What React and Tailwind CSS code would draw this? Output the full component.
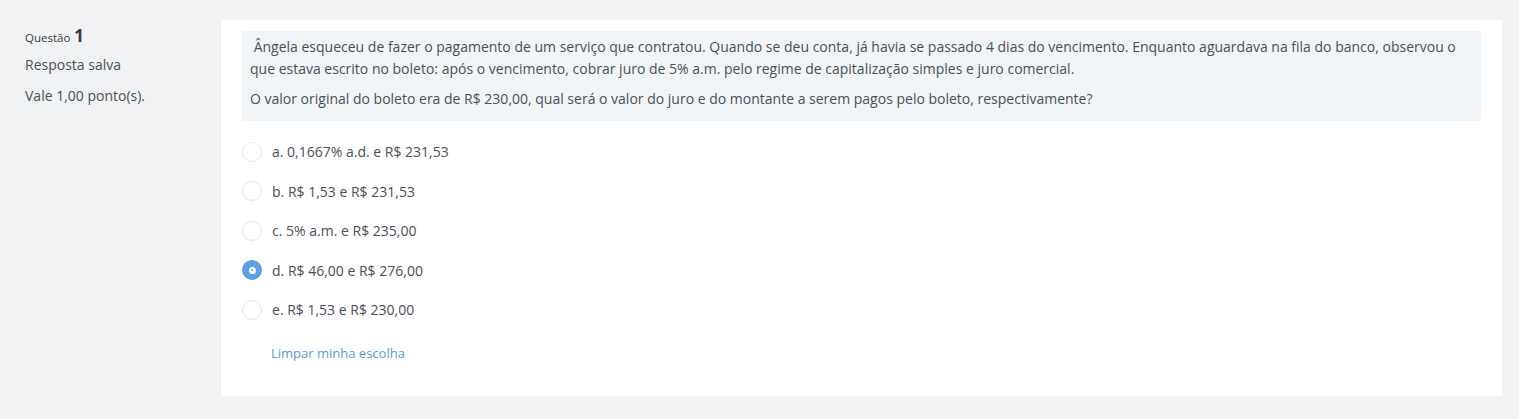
import React, { useState } from 'react';

const options = [
  { key: 'a', text: '0,1667% a.d. e R$ 231,53' },
  { key: 'b', text: 'R$ 1,53 e R$ 231,53' },
  { key: 'c', text: '5% a.m. e R$ 235,00' },
  { key: 'd', text: 'R$ 46,00 e R$ 276,00' },
  { key: 'e', text: 'R$ 1,53 e R$ 230,00' },
];

const Radio = ({ checked }) =>
  checked ? (
    <span className="flex h-[20px] w-[20px] items-center justify-center rounded-full bg-[#5b9fe0]">
      <span className="flex h-[7px] w-[7px] items-center justify-center rounded-full bg-white">
        <span className="h-[2px] w-[2px] rounded-full bg-[#5b9fe0]" />
      </span>
    </span>
  ) : (
    <span className="h-[20px] w-[20px] rounded-full border border-[#e3e6e8] bg-white" />
  );

const App = () => {
  const [answer, setAnswer] = useState('d');

  return (
    <div
      className="flex min-h-[419px] bg-[#f0f2f3] pt-[20px] text-[#495057]"
      style={{ fontFamily: '"Open Sans", "Noto Sans", sans-serif' }}
    >
      {/* Info da questão */}
      <div className="w-[221px] shrink-0 pl-[25px] pt-[5px]">
        <h3 className="flex items-baseline gap-[4px] leading-[22px] text-[#373a3c]">
          <span className="text-[11.5px]">Questão</span>
          <span className="text-[17px] font-bold">1</span>
        </h3>
        <div className="mt-[6px] text-[14px] leading-[20px]">Resposta salva</div>
        <div className="mt-[11px] text-[14px] leading-[20px]">Vale 1,00 ponto(s).</div>
      </div>

      {/* Conteúdo */}
      <div className="mr-[17px] h-[376px] flex-1 bg-white px-[21px] pt-[11px]">
        <div className="rounded-[3px] bg-[#f2f5f8] px-[8px] pb-[11px] pt-[5px] text-[14px] leading-[22px]">
          <p>{'\u00a0'}Ângela esqueceu de fazer o pagamento de um serviço que contratou. Quando se deu conta, já havia se passado 4 dias do vencimento. Enquanto aguardava na fila do banco, observou o que estava escrito no boleto: após o vencimento, cobrar juro de 5% a.m. pelo regime de capitalização simples e juro comercial.</p>
          <p className="mt-[8px]">O valor original do boleto era de R$ 230,00, qual será o valor do juro e do montante a serem pagos pelo boleto, respectivamente?</p>
        </div>

        <div className="mt-[11px] flex flex-col">
          {options.map((opt) => (
            <label
              key={opt.key}
              onClick={() => setAnswer(opt.key)}
              className="flex h-[39.5px] cursor-pointer items-center gap-[10px] text-[14px]"
            >
              <Radio checked={answer === opt.key} />
              <span>
                {opt.key}. {opt.text}
              </span>
            </label>
          ))}
        </div>

        <button
          onClick={() => setAnswer(null)}
          className="ml-[29px] mt-[14px] text-[13px] text-[#5a9bd5]"
        >
          Limpar minha escolha
        </button>
      </div>
    </div>
  );
};

export default App;
